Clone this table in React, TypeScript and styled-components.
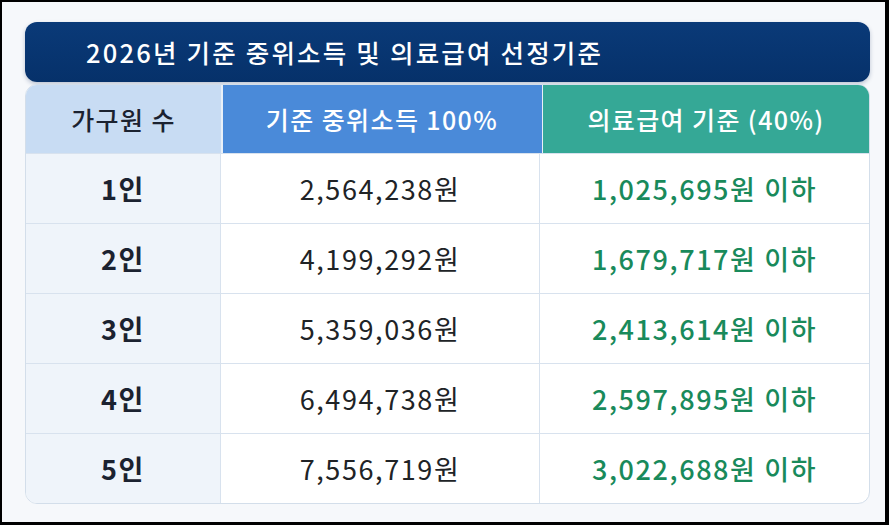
import styled, { createGlobalStyle } from "styled-components";

const GlobalStyle = createGlobalStyle`
  html, body {
    margin: 0;
    padding: 0;
    background: #000;
  }
  body {
    font-family: "Noto Sans CJK KR", "Noto Sans", sans-serif;
  }
`;

type Row = { people: string; median: string; medical: string };

const rows: Row[] = [
  { people: "1인", median: "2,564,238원", medical: "1,025,695원 이하" },
  { people: "2인", median: "4,199,292원", medical: "1,679,717원 이하" },
  { people: "3인", median: "5,359,036원", medical: "2,413,614원 이하" },
  { people: "4인", median: "6,494,738원", medical: "2,597,895원 이하" },
  { people: "5인", median: "7,556,719원", medical: "3,022,688원 이하" },
];

const App = () => {
  return (
    <>
      <GlobalStyle />
      <Frame>
        <Card>
          <TitleBar>2026년 기준 중위소득 및 의료급여 선정기준</TitleBar>
          <Table>
            <HeadRow>
              <HeadCell tone="people">가구원 수</HeadCell>
              <HeadCell tone="median">기준 중위소득 100%</HeadCell>
              <HeadCell tone="medical">의료급여 기준 (40%)</HeadCell>
            </HeadRow>
            {rows.map((r) => (
              <BodyRow key={r.people}>
                <PeopleCell>{r.people}</PeopleCell>
                <MedianCell>{r.median}</MedianCell>
                <MedicalCell>{r.medical}</MedicalCell>
              </BodyRow>
            ))}
          </Table>
        </Card>
      </Frame>
    </>
  );
};

export default App;

const Frame = styled.div`
  margin: 2px 4px 3px 2px;
  height: 520px;
  background: #f6f8fb;
  box-sizing: border-box;
  padding: 20px 0 0 23px;
`;

const Card = styled.div`
  width: 845px;
  display: flex;
  flex-direction: column;
  gap: 2px;
`;

const TitleBar = styled.div`
  height: 60px;
  border-radius: 12px;
  background: linear-gradient(180deg, #0a3a78 0%, #06316a 100%);
  box-shadow: 0 2px 4px rgba(10, 40, 90, 0.25);
  color: #fff;
  font-size: 25.5px;
  font-weight: 500;
  display: flex;
  align-items: center;
  padding-left: 61px;
  padding-bottom: 2px;
  box-sizing: border-box;
  letter-spacing: 2.2px;
`;

const Table = styled.div`
  border: 1.5px solid #d3deea;
  border-radius: 12px;
  overflow: hidden;
  background: #fff;
`;

const columns = "195px 319px 1fr";

const HeadRow = styled.div`
  display: grid;
  grid-template-columns: ${columns};
  height: 68px;
  gap: 1.5px;
  background: #e9f0f8;
`;

const headTones = {
  people: { bg: "#c8dcf3", color: "#1b2230" },
  median: { bg: "#4a8ad9", color: "#ffffff" },
  medical: { bg: "#35a896", color: "#ffffff" },
};

const HeadCell = styled.div<{ tone: keyof typeof headTones }>`
  display: flex;
  align-items: center;
  justify-content: center;
  background: ${(p) => headTones[p.tone].bg};
  color: ${(p) => headTones[p.tone].color};
  font-size: 25px;
  font-weight: 500;
  letter-spacing: 1.4px;
`;

const BodyRow = styled.div`
  display: grid;
  grid-template-columns: ${columns};
  height: 70px;
  border-top: 1.5px solid #d8e2ee;
  box-sizing: border-box;
`;

const Cell = styled.div`
  display: flex;
  align-items: center;
  justify-content: center;
  font-size: 27px;
  letter-spacing: 1.6px;
  border-right: 1.5px solid #d8e2ee;

  &:last-child {
    border-right: none;
  }
`;

const PeopleCell = styled(Cell)`
  background: #eff4fa;
  color: #1b2230;
  font-weight: 700;
`;

const MedianCell = styled(Cell)`
  color: #202326;
  font-weight: 400;
`;

const MedicalCell = styled(Cell)`
  color: #198a5b;
  font-weight: 500;
`;
